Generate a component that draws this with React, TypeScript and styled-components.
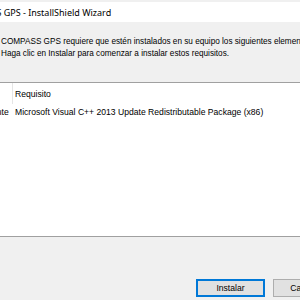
import React from "react";
import styled, { createGlobalStyle } from "styled-components";

const GlobalStyle = createGlobalStyle`
  html, body {
    margin: 0;
    padding: 0;
    background: #f0f0f0;
    overflow: hidden;
  }
  body {
    font-family: "Liberation Sans", Arial, sans-serif;
  }
`;

const requisitos = [
  {
    estado: "Pendiente",
    nombre: "Microsoft Visual C++ 2013 Update Redistributable Package (x86)",
  },
];

const App = () => {
  return (
    <>
      <GlobalStyle />
      <Window>
        <TitleBar>
          <Title>COMPASS GPS - InstallShield Wizard</Title>
        </TitleBar>
        <Body>
          <Message>
            COMPASS GPS requiere que estén instalados en su equipo los siguientes elementos.
            <br />
            Haga clic en Instalar para comenzar a instalar estos requisitos.
          </Message>
          <ListBox>
            <HeaderRow>
              <StatusCell>Estado</StatusCell>
              <HeaderSep />
              <Cell>Requisito</Cell>
            </HeaderRow>
            {requisitos.map((r) => (
              <Row key={r.nombre}>
                <StatusCell>{r.estado}</StatusCell>
                <Gap />
                <Cell>{r.nombre}</Cell>
              </Row>
            ))}
          </ListBox>
          <ButtonBar>
            <Button primary>Instalar</Button>
            <Button>Cancelar</Button>
          </ButtonBar>
        </Body>
      </Window>
    </>
  );
};

const Window = styled.div`
  width: 460px;
  height: 300px;
  margin-left: -76px;
  display: flex;
  flex-direction: column;
  background: #f0f0f0;
`;

const TitleBar = styled.div`
  height: 20px;
  margin-top: 2px;
  background: #ffffff;
  display: flex;
  align-items: center;
  padding-left: 36px;
`;

const Title = styled.span`
  font-family: "Noto Sans", "Open Sans", sans-serif;
  font-size: 9px;
  color: #000;
  white-space: nowrap;
`;

const Body = styled.div`
  flex: 1;
  display: flex;
  flex-direction: column;
`;

const Message = styled.div`
  margin: 14px 0 0 77px;
  font-size: 8.2px;
  line-height: 12px;
  color: #000;
  white-space: nowrap;
`;

const ListBox = styled.div`
  margin: 22px 0 0 0;
  height: 153px;
  background: #ffffff;
  border-top: 1px solid #a0a0a0;
  border-bottom: 1px solid #a0a0a0;
`;

const HeaderRow = styled.div`
  height: 21px;
  display: flex;
  align-items: center;
  font-size: 8.6px;
  color: #000;
`;

const HeaderSep = styled.div`
  width: 1px;
  align-self: stretch;
  background: #e5e5e5;
  margin-right: 2px;
`;

const Row = styled.div`
  height: 16px;
  display: flex;
  align-items: center;
  font-size: 8.6px;
  color: #000;
`;

const Gap = styled.div`
  width: 3px;
`;

const Cell = styled.div`
  white-space: nowrap;
`;

const StatusCell = styled(Cell)`
  width: 88px;
  box-sizing: border-box;
  padding-left: 46px;
  overflow: hidden;
`;

const ButtonBar = styled.div`
  margin-top: auto;
  margin-bottom: 3px;
  display: flex;
  gap: 8px;
  padding-left: 272px;
`;

const Button = styled.button<{ primary?: boolean }>`
  width: 69px;
  height: 18px;
  padding: 0;
  font-family: "Liberation Sans", Arial, sans-serif;
  font-size: 8.6px;
  color: #000;
  background: #e1e1e1;
  border: ${({ primary }) => (primary ? "2px solid #0078d7" : "1px solid #adadad")};
  box-sizing: border-box;
`;

export default App;
